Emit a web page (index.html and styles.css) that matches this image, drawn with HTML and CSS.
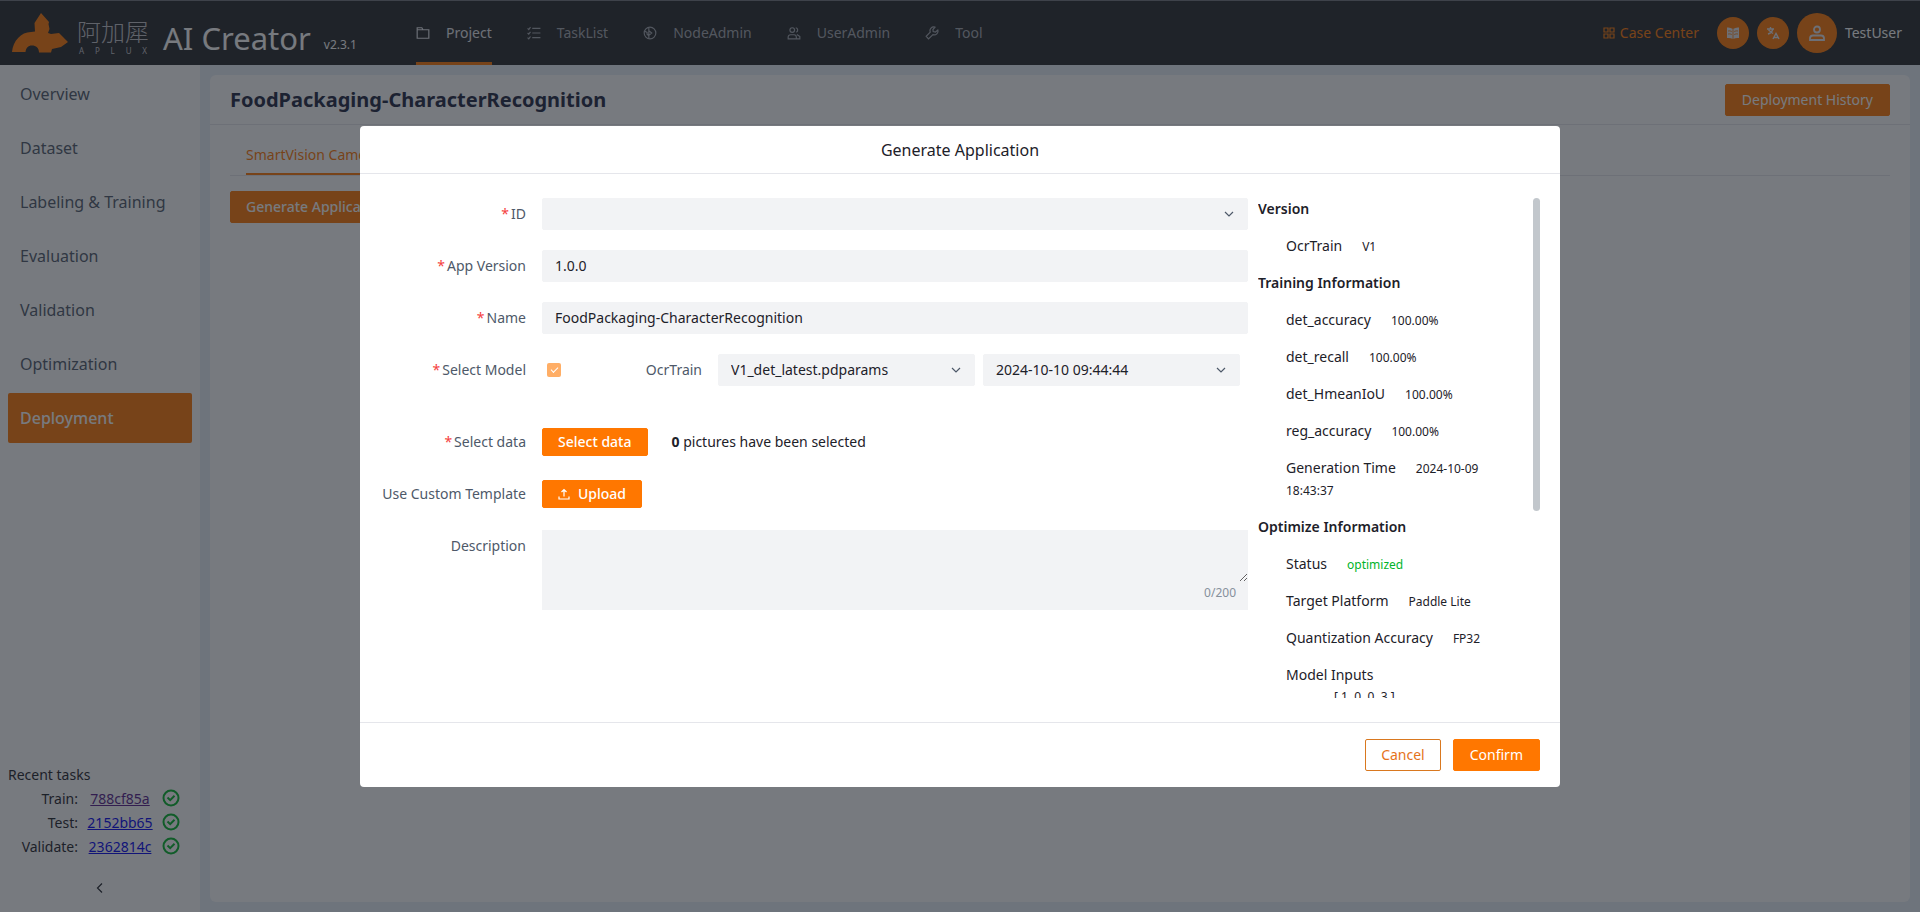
FILE: index.html
```html
<!DOCTYPE html>
<html lang="en">
<head>
<meta charset="utf-8">
<title>AI Creator</title>
<link rel="stylesheet" href="styles.css">
</head>
<body>
<div class="app">
  <header class="topbar">
    <div class="brand">
      <svg class="brand-mark" viewBox="0 0 56 40" aria-hidden="true"><path d="M0 39C1 28 9 19 19 19L23 18.500L22.500 10L29 0L37 9L36.500 11L37.500 16L36 20L39 21L47 20L51 24L56 29L49 34L40 36L39 39.500H27C27 35 24 32.500 20 32.500C16 32.500 14 35 13.500 39Z"/></svg>
      <div class="brand-name"><span class="brand-cjk">阿加犀</span><span class="brand-latin">A P L U X</span></div>
      <span class="product">AI Creator</span>
      <span class="version">v2.3.1</span>
    </div>
    <nav class="topnav">
      <a class="topnav-item active" href="#"><svg class="icon" viewBox="0 0 12 12"><path d="M1 10.500V1.500H5L6 3.200H11V10.500ZM1 3.200H6"/></svg>Project</a>
      <a class="topnav-item" href="#"><svg class="icon" viewBox="0 0 12 12"><path d="M0.500 2L1.500 3L3 1M0.500 6L1.500 7L3 5M0.500 10L1.500 11L3 9M4.500 2H11.500M4.500 6H11.500M4.500 10H11.500"/></svg>TaskList</a>
      <a class="topnav-item" href="#"><svg class="icon" viewBox="0 0 12 12"><circle cx="6" cy="6" r="5"/><path d="M1.500 4.500L3.500 5.500V7L5 8.500V11M5 1.500V4L7.500 6L5 8M5 4V8"/></svg>NodeAdmin</a>
      <a class="topnav-item" href="#"><svg class="icon" viewBox="0 0 12 12"><circle cx="4.500" cy="3.500" r="2"/><path d="M7.500 1.500A2 2 0 0 1 8 5.300M1 11V9.500A2 2 0 0 1 3 7.500H6A2 2 0 0 1 8 9.500V11ZM8.500 7.300L11 9V11H8"/></svg>UserAdmin</a>
      <a class="topnav-item" href="#"><svg class="icon" viewBox="0 0 12 12"><path d="M8.500 1A3.200 3.200 0 0 0 4.500 5.200L1 8.800L3 11L6.800 7.400A3.200 3.200 0 0 0 11 3.500L9 5.200L7 4.800L6.800 3Z"/></svg>Tool</a>
    </nav>
    <div class="account">
      <a class="case-link" href="#"><svg class="icon" viewBox="0 0 12 12"><path d="M1 1H5V5H1ZM7 1H11V5H7ZM1 7H5V11H1ZM7 7H11V11H7Z"/></svg>Case Center</a>
      <button class="round" aria-label="Documentation"><svg class="glyph" viewBox="0 0 14 14"><path class="solid" d="M1 1.500Q4 1 7 3Q10 1 13 1.500V12Q10 11.500 7 13Q4 11.500 1 12Z"/><path class="cut" d="M7 3V13M2 5Q4 4.500 5.800 5.500M2 8Q4 7.500 5.800 8.500M8.200 5.500Q10 4.500 12 5M8.200 8.500Q10 7.500 12 8"/></svg></button>
      <button class="round" aria-label="Language"><svg class="glyph" viewBox="0 0 14 14"><path class="line" d="M1 3H8M4.500 1V3M2 8Q6 7 6.800 3M2.500 4L7 7.500"/><path class="line" d="M7 13L10 7.500L13 13M8 11.500H12"/></svg></button>
      <button class="round avatar" aria-label="Account"><svg class="person" viewBox="0 0 16 16"><circle cx="8" cy="4.500" r="3"/><path d="M1 15V13A3 3 0 0 1 4 10.500H12A3 3 0 0 1 15 13V15Z"/></svg></button>
      <span class="user">TestUser</span>
    </div>
  </header>
  <div class="workspace">
    <aside class="sidebar">
      <nav class="menu">
        <a class="menu-item" href="#">Overview</a>
        <a class="menu-item" href="#">Dataset</a>
        <a class="menu-item" href="#">Labeling &amp; Training</a>
        <a class="menu-item" href="#">Evaluation</a>
        <a class="menu-item" href="#">Validation</a>
        <a class="menu-item" href="#">Optimization</a>
        <a class="menu-item active" href="#">Deployment</a>
      </nav>
      <section class="recent">
        <div>Recent tasks</div>
        <div class="task"><span class="task-kind">Train:</span><a class="task-link seen" href="#">788cf85a</a><svg class="check" viewBox="0 0 18 18"><circle cx="9" cy="9" r="7.500"/><path d="M5.500 8.500L8.200 11.200L12.500 6.800"/></svg></div>
        <div class="task"><span class="task-kind">Test:</span><a class="task-link" href="#">2152bb65</a><svg class="check" viewBox="0 0 18 18"><circle cx="9" cy="9" r="7.500"/><path d="M5.500 8.500L8.200 11.200L12.500 6.800"/></svg></div>
        <div class="task"><span class="task-kind">Validate:</span><a class="task-link" href="#">2362814c</a><svg class="check" viewBox="0 0 18 18"><circle cx="9" cy="9" r="7.500"/><path d="M5.500 8.500L8.200 11.200L12.500 6.800"/></svg></div>
      </section>
      <button class="collapse" aria-label="Collapse menu"><svg class="icon" viewBox="0 0 12 12"><path d="M8 1.500L3.500 6L8 10.500"/></svg></button>
    </aside>
    <main class="main">
      <div class="card">
        <div class="card-head">
          <h1 class="title">FoodPackaging-CharacterRecognition</h1>
          <button class="btn">Deployment History</button>
        </div>
        <div class="card-body">
          <div class="tabs"><a class="tab" href="#">SmartVision Camera</a></div>
          <button class="btn strong">Generate Application</button>
        </div>
      </div>
    </main>
  </div>
</div>

<div class="mask">
  <div class="modal" role="dialog" aria-labelledby="modal-title">
    <h2 class="modal-head" id="modal-title">Generate Application</h2>
    <div class="modal-body">
      <form class="form">
        <label class="label required" for="id">ID</label>
        <div class="pick"><select class="field" id="id"><option></option></select><svg class="arrow" viewBox="0 0 12 12"><path d="M2 4L6 8L10 4"/></svg></div>
        <label class="label required" for="app-version">App Version</label>
        <input class="field" id="app-version" type="text" value="1.0.0">
        <label class="label required" for="name">Name</label>
        <input class="field" id="name" type="text" value="FoodPackaging-CharacterRecognition">
        <label class="label required" for="use-model">Select Model</label>
        <div class="model">
          <input class="tick" id="use-model" type="checkbox" checked disabled>
          <label class="label model-name" for="params">OcrTrain</label>
          <div class="pick"><select class="field" id="params"><option>V1_det_latest.pdparams</option></select><svg class="arrow" viewBox="0 0 12 12"><path d="M2 4L6 8L10 4"/></svg></div>
          <div class="pick"><select class="field" id="stamp" aria-label="Model time"><option>2024-10-10 09:44:44</option></select><svg class="arrow" viewBox="0 0 12 12"><path d="M2 4L6 8L10 4"/></svg></div>
        </div>
        <label class="label required" for="data">Select data</label>
        <div class="line"><button class="btn strong small" id="data" type="button">Select data</button><span><b>0</b> pictures have been selected</span></div>
        <label class="label" for="upload">Use Custom Template</label>
        <div class="line"><button class="btn strong small" id="upload" type="button"><svg class="icon" viewBox="0 0 12 12"><path d="M1 8.500V11H11V8.500M6 8.500V1.500M3.500 4L6 1.500L8.500 4"/></svg>Upload</button></div>
        <label class="label" for="description">Description</label>
        <div class="area"><textarea class="text" id="description"></textarea><span class="count">0/200</span></div>
      </form>
      <aside class="info">
        <div class="info-scroll">
          <h3 class="info-head">Version</h3>
          <div class="info-row">OcrTrain<span class="value">V1</span></div>
          <h3 class="info-head">Training Information</h3>
          <div class="info-row">det_accuracy<span class="value">100.00%</span></div>
          <div class="info-row">det_recall<span class="value">100.00%</span></div>
          <div class="info-row">det_HmeanIoU<span class="value">100.00%</span></div>
          <div class="info-row">reg_accuracy<span class="value">100.00%</span></div>
          <div class="info-row">Generation Time<span class="value">2024-10-09 18:43:37</span></div>
          <h3 class="info-head">Optimize Information</h3>
          <div class="info-row">Status<span class="value good">optimized</span></div>
          <div class="info-row">Target Platform<span class="value">Paddle Lite</span></div>
          <div class="info-row">Quantization Accuracy<span class="value">FP32</span></div>
          <div class="info-row">Model Inputs<div class="shape">[ 1, 0, 0, 3 ]</div></div>
        </div>
        <div class="thumb"></div>
      </aside>
    </div>
    <div class="modal-foot">
      <button class="btn outline">Cancel</button>
      <button class="btn">Confirm</button>
    </div>
  </div>
</div>
</body>
</html>
```
FILE: styles.css
```css
* { box-sizing: border-box; }
body {
  margin: 0;
  font: 14px/22px "Noto Sans", "Noto Sans CJK SC", sans-serif;
  color: #1d2129;
}
a { color: inherit; text-decoration: none; }
button, input, select, textarea { font: inherit; color: inherit; }
h1, h2, h3 { margin: 0; }
.icon { width: 12px; height: 12px; flex: none; fill: none; stroke: currentColor; stroke-width: 1.2; }

.app { display: flex; flex-direction: column; height: 100vh; }
.topbar {
  display: flex;
  align-items: stretch;
  height: 65px;
  background: #242628;
  border-top: 1px solid #70747a;
  color: #fff;
}
.brand { display: flex; align-items: center; width: 416px; padding-left: 12px; }
.brand-mark { width: 56px; height: 40px; fill: #ff7700; }
.brand-name { display: flex; flex-direction: column; width: 72px; margin: 8px 14px 0 9px; color: #c4c4c8; }
.brand-cjk { font: 300 24px/28px "Noto Sans CJK SC", sans-serif; }
.brand-latin { font-size: 8px; line-height: 12px; text-align-last: justify; padding: 0 2px; }
.product { font-size: 31px; line-height: 40px; padding-top: 10px; white-space: nowrap; }
.version { font-size: 12px; margin: 24px 0 0 13px; }
.topnav { display: flex; gap: 35px; }
.topnav-item { display: flex; align-items: center; gap: 16px; color: #a4a8b0; border-bottom: 3px solid transparent; padding-top: 3px; }
.topnav-item .icon { width: 14px; height: 14px; stroke-width: 1; }
.topnav-item.active { color: #e5e6eb; border-color: #ff7700; }
.account { display: flex; align-items: center; margin-left: auto; padding-right: 18px; gap: 8px; }
.case-link { display: flex; align-items: center; gap: 5px; color: #ff7700; margin-right: 10px; }
.round { display: flex; align-items: center; justify-content: center; width: 32px; height: 32px; padding: 0; border: 0; border-radius: 50%; background: #ff7700; }
.avatar { width: 40px; height: 40px; }
.glyph { width: 14px; height: 14px; }
.solid { fill: #e5e6eb; }
.cut { fill: none; stroke: #ff7700; stroke-width: 0.8; }
.line { fill: none; stroke: #e5e6eb; stroke-width: 1.4; }
.person { width: 16px; height: 16px; fill: none; stroke: #e5e6eb; stroke-width: 1.8; }

.workspace { display: flex; flex: 1; min-height: 0; background: #e8f0f8; }
.sidebar { display: flex; flex-direction: column; width: 200px; padding: 4px 8px 18px; background: #fff; }
.menu { display: flex; flex-direction: column; gap: 4px; }
.menu-item { padding: 0 12px; font-size: 16px; line-height: 50px; color: #4e5969; }
.menu-item.active { background: #ff7700; color: #fff; font-weight: 500; border-radius: 2px; }
.recent { margin-top: auto; line-height: 24px; }
.task { display: grid; grid-template-columns: 70px 84px 18px; align-items: center; }
.task-kind { text-align: right; }
.task-link { text-align: center; text-decoration: underline; color: #0000ee; }
.task-link.seen { color: #551a8b; }
.check { width: 18px; height: 18px; margin-bottom: 3px; fill: none; stroke: #00b42a; stroke-width: 2; }
.collapse { align-self: center; display: flex; margin-top: 23px; padding: 0; border: 0; background: none; color: #1d2129; }

.main { display: flex; flex: 1; padding: 10px; }
.card { flex: 1; background: #fff; border-radius: 6px; }
.card-head { display: flex; align-items: center; justify-content: space-between; height: 50px; padding: 0 20px; border-bottom: 1px solid #e5e6eb; }
.title { font-size: 20px; line-height: 30px; font-weight: 700; color: #1d2540; }
.card-body { padding: 16px 20px; }
.tabs { padding: 0 16px; border-bottom: 1px solid #e5e6eb; margin-bottom: 15px; }
.tab { display: inline-block; padding: 3px 0 7px; line-height: 22px; color: #ff7700; border-bottom: 2px solid #ff7700; vertical-align: top; }

.btn { height: 32px; padding: 0 16px; border: 1px solid #ff7700; border-radius: 2px; background: #ff7700; color: #fff; line-height: 22px; }
.btn.strong { padding: 0 15px; font-weight: 500; }
.btn.small { display: flex; align-items: center; gap: 8px; height: 28px; }
.btn.outline { padding: 0 15px; background: #fff; border-color: #d9781f; color: #e5731a; }

.mask { position: fixed; inset: 0; display: flex; align-items: center; justify-content: center; background: rgba(29, 33, 41, 0.6); }
.modal { width: 1200px; max-width: 100%; background: #fff; border-radius: 4px; }
.modal-head { height: 48px; border-bottom: 1px solid #e5e6eb; text-align: center; font-size: 16px; font-weight: 400; line-height: 48px; }
.modal-body { display: grid; grid-template-columns: 1fr 282px; gap: 10px; padding: 24px 20px; }
.modal-foot { display: flex; justify-content: flex-end; gap: 12px; padding: 16px 20px; border-top: 1px solid #e5e6eb; }

.form { display: grid; grid-template-columns: 146px 1fr; gap: 20px 16px; align-content: start; }
.label { text-align: right; line-height: 32px; color: #4e5969; white-space: nowrap; }
.required::before { content: "*"; color: #f53f3f; margin-right: 2px; }
.field { width: 100%; height: 32px; padding: 0 12px; border: 1px solid #f2f3f5; border-radius: 2px; background: #f2f3f5; appearance: none; }
.pick { display: grid; align-items: center; }
.pick > * { grid-area: 1 / 1; }
.arrow { width: 12px; height: 12px; justify-self: end; margin-right: 13px; fill: none; stroke: #4e5969; stroke-width: 1.2; pointer-events: none; }
.model { display: grid; grid-template-columns: 14px 1fr 257px 257px; align-items: center; gap: 8px; padding: 0 8px 20px 5px; }
.model-name { padding-right: 8px; }
.tick { appearance: none; width: 14px; height: 14px; margin: 0; border-radius: 2px; background: #ffae66; display: grid; place-items: center; }
.tick::before { content: ""; width: 6px; height: 3px; border-left: 1px solid #fff; border-bottom: 1px solid #fff; transform: rotate(-45deg); margin-bottom: 2px; }
.form .line { display: flex; align-items: center; gap: 24px; }
.area { display: flex; flex-direction: column; height: 80px; background: #f2f3f5; }
.text { flex: 1; width: 100%; min-height: 52px; padding: 4px 12px; border: 0; background: none; resize: vertical; }
.count { align-self: flex-end; padding: 0 12px 6px 0; font-size: 12px; line-height: 22px; color: #86909c; }

.info { display: flex; height: 500px; }
.info-scroll { flex: 1; overflow: hidden; padding-right: 40px; }
.info-head { margin-bottom: 15px; font-size: 14px; line-height: 22px; font-weight: 600; }
.info-row { margin-bottom: 15px; padding-left: 28px; }
.value { margin-left: 20px; font-size: 12px; line-height: 20px; }
.good { color: #00b42a; }
.shape { padding-left: 48px; font-size: 12px; line-height: 22px; }
.thumb { width: 7px; height: 313px; border-radius: 4px; background: #c2c7cc; }
```
